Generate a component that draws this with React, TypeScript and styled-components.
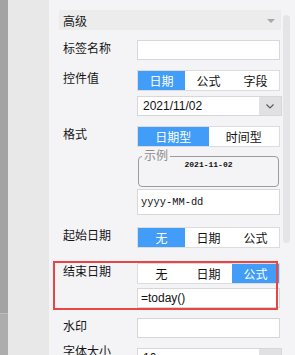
import React from 'react';
import styled, { createGlobalStyle, css } from 'styled-components';

const GlobalStyle = createGlobalStyle`
    html, body {
        margin: 0;
        padding: 0;
        background: #f4f4f6;
    }
    body {
        font-family: 'Liberation Sans', 'Noto Sans CJK SC', sans-serif;
        font-size: 12px;
        color: #1a1a1a;
    }
`;

const Page = styled.div`
    display: flex;
    width: 295px;
    height: 355px;
    overflow: hidden;
    background: #f4f4f6;
`;

const Strip = styled.div`
    width: 8px;
    display: flex;
    flex-direction: column;
`;

const StripPart = styled.div<{ $h?: number; $color: string }>`
    height: ${(p) => (p.$h ? `${p.$h}px` : 'auto')};
    flex: ${(p) => (p.$h ? 'none' : '1')};
    background: ${(p) => p.$color};
    border-bottom: ${(p) => (p.$h ? '1px solid #bdbdbd' : 'none')};
`;

const Gutter = styled.div`
    width: 41px;
    background: #e8e8e8;
`;

const Panel = styled.div`
    flex: 1;
    display: flex;
    gap: 2px;
    padding: 10px 0 0 10px;
`;

const Form = styled.div`
    width: 222px;
    display: flex;
    flex-direction: column;
`;

const Scrollbar = styled.div`
    width: 7px;
    height: 228px;
    margin-top: 5px;
    border-radius: 4px;
    background: #e5e5e7;
`;

const Header = styled.div`
    flex: none;
    height: 20px;
    display: flex;
    align-items: center;
    justify-content: space-between;
    padding: 0 6px 0 4px;
    background: #ececec;
`;

const Caret = styled.span`
    width: 0;
    height: 0;
    border-left: 4px solid transparent;
    border-right: 4px solid transparent;
    border-top: 4px solid #a8a8a8;
    margin-top: 1px;
`;

const highlightBox = css`
    &::after {
        content: '';
        position: absolute;
        top: -2px;
        bottom: -2px;
        left: -6px;
        right: 3px;
        border: 2px solid #ea4545;
        pointer-events: none;
    }
`;

const Row = styled.div<{ $mt: number; $highlight?: boolean }>`
    position: relative;
    flex: none;
    display: grid;
    grid-template-columns: 78px 144px;
    margin-top: ${(p) => p.$mt}px;
    ${(p) => p.$highlight && highlightBox}
`;

const Label = styled.div<{ $lift?: number }>`
    padding-left: 4px;
    line-height: 18px;
    margin-top: ${(p) => (p.$lift ? -p.$lift : 0)}px;
    color: #151515;
`;

const Controls = styled.div<{ $gap?: number }>`
    display: flex;
    flex-direction: column;
    gap: ${(p) => p.$gap ?? 5}px;
`;

const Input = styled.div<{ $h?: number; $mono?: boolean }>`
    box-sizing: border-box;
    width: 143px;
    height: ${(p) => p.$h ?? 20}px;
    display: flex;
    align-items: center;
    padding: 0 3px;
    background: #fff;
    border: 1px solid #d7d7d9;
    font-family: ${(p) =>
        p.$mono ? "'Liberation Mono', monospace" : "'Liberation Sans', sans-serif"};
    font-size: ${(p) => (p.$mono ? '10.4px' : '12px')};
    color: #111;
`;

const Select = styled.div`
    box-sizing: border-box;
    width: 145px;
    height: 20px;
    display: flex;
    background: #fff;
    border: 1px solid #d7d7d9;
`;

const SelectValue = styled.div`
    flex: 1;
    display: flex;
    align-items: center;
    padding-left: 5px;
    font-family: 'Liberation Sans', sans-serif;
    font-size: 12px;
    color: #111;
`;

const SelectArrow = styled.div`
    width: 22px;
    display: flex;
    align-items: center;
    justify-content: center;
    background: #e1e1e3;
`;

const Seg = styled.div<{ $count: number }>`
    box-sizing: border-box;
    width: 143px;
    height: 21px;
    display: grid;
    grid-template-columns: repeat(${(p) => p.$count}, 1fr);
    background: #fff;
    border: 1px solid #dcdcde;
`;

const SegItem = styled.div<{ $active?: boolean }>`
    display: flex;
    align-items: center;
    justify-content: center;
    background: ${(p) => (p.$active ? '#419df8' : 'transparent')};
    color: ${(p) => (p.$active ? '#fff' : '#111')};
`;

const Sample = styled.fieldset`
    box-sizing: border-box;
    width: 141px;
    height: 38px;
    margin: 0 0 0 1px;
    padding: 0;
    border: 1px solid #9c9c9c;
    border-radius: 4px;
    display: flex;
    align-items: center;
    justify-content: center;
`;

const SampleLegend = styled.legend`
    margin-left: 3px;
    padding: 0 2px;
    line-height: 14px;
    color: #8c8c8c;
`;

const SampleText = styled.div`
    width: 100%;
    margin-top: -3px;
    text-align: center;
    font-family: 'Liberation Mono', monospace;
    font-size: 8px;
    font-weight: bold;
    color: #111;
`;

const Chevron = () => (
    <svg width='8' height='5' viewBox='0 0 8 5'>
        <polyline points='0.5,0.5 4,4 7.5,0.5' fill='none' stroke='#555' strokeWidth='1.1' />
    </svg>
);

const Segmented = ({ items, active }: { items: string[]; active: number }) => (
    <Seg $count={items.length}>
        {items.map((item, i) => (
            <SegItem key={item} $active={i === active}>
                {item}
            </SegItem>
        ))}
    </Seg>
);

const App = () => {
    return (
        <Page>
            <GlobalStyle />
            <Strip>
                <StripPart $h={313} $color='#a3a3a3' />
                <StripPart $color='#adadad' />
            </Strip>
            <Gutter />
            <Panel>
                <Form>
                    <Header>
                        高级
                        <Caret />
                    </Header>

                    <Row $mt={10}>
                        <Label>标签名称</Label>
                        <Controls>
                            <Input />
                        </Controls>
                    </Row>

                    <Row $mt={10}>
                        <Label>控件值</Label>
                        <Controls>
                            <Segmented items={['日期', '公式', '字段']} active={0} />
                            <Select>
                                <SelectValue>2021/11/02</SelectValue>
                                <SelectArrow>
                                    <Chevron />
                                </SelectArrow>
                            </Select>
                        </Controls>
                    </Row>

                    <Row $mt={10}>
                        <Label>格式</Label>
                        <Controls $gap={2}>
                            <Segmented items={['日期型', '时间型']} active={0} />
                            <Sample>
                                <SampleLegend>示例</SampleLegend>
                                <SampleText>2021-11-02</SampleText>
                            </Sample>
                            <Input $h={26} $mono>
                                yyyy-MM-dd
                            </Input>
                        </Controls>
                    </Row>

                    <Row $mt={12}>
                        <Label>起始日期</Label>
                        <Controls>
                            <Segmented items={['无', '日期', '公式']} active={0} />
                        </Controls>
                    </Row>

                    <Row $mt={15} $highlight>
                        <Label>结束日期</Label>
                        <Controls $gap={4}>
                            <Segmented items={['无', '日期', '公式']} active={2} />
                            <Input>=today()</Input>
                        </Controls>
                    </Row>

                    <Row $mt={10}>
                        <Label>水印</Label>
                        <Controls>
                            <Input />
                        </Controls>
                    </Row>

                    <Row $mt={10}>
                        <Label $lift={5}>字体大小</Label>
                        <Controls>
                            <Select>
                                <SelectValue>10</SelectValue>
                                <SelectArrow />
                            </Select>
                        </Controls>
                    </Row>
                </Form>
                <Scrollbar />
            </Panel>
        </Page>
    );
};

export default App;
